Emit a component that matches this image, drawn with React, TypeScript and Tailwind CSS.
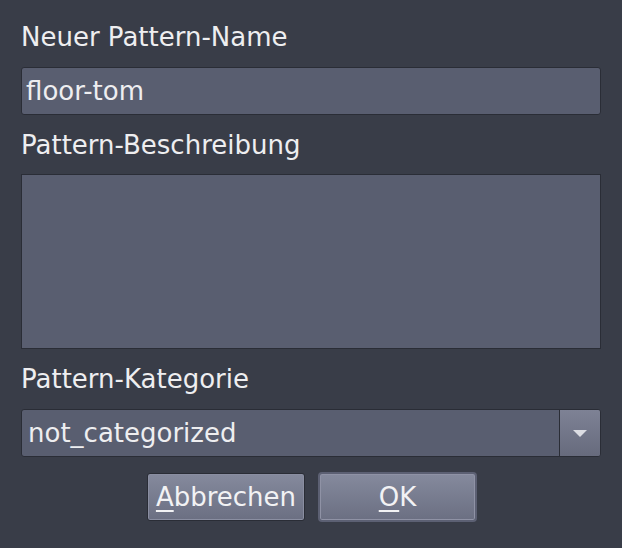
export default function App() {
  const font = { fontFamily: '"DejaVu Sans", sans-serif' }
  return (
    <div
      className="w-[622px] h-[548px] bg-[#393d48] text-[#eeeef0] text-[26px] px-[21px] pt-[23px] overflow-hidden"
      style={font}
    >
      <div className="h-[28px] leading-[28px]">Neuer Pattern-Name</div>

      <div className="mt-[16px] h-[48px] rounded-[3px] border border-[#2a2d36] bg-[#595e70] flex items-center pl-[4px]">
        <span className="leading-none">floor-tom</span>
      </div>

      <div className="mt-[16px] h-[28px] leading-[28px]">Pattern-Beschreibung</div>

      <div className="mt-[15px] h-[175px] border border-[#2a2d36] bg-[#595e70]" />

      <div className="mt-[16px] h-[28px] leading-[28px]">Pattern-Kategorie</div>

      <div className="mt-[16px] h-[48px] rounded-[3px] border border-[#2a2d36] bg-[#595e70] flex overflow-hidden">
        <div className="flex-1 flex items-center pl-[6px]">
          <span className="leading-none">not_categorized</span>
        </div>
        <div className="w-[41px] border-l border-[#2a2d36] bg-gradient-to-b from-[#7e8295] to-[#676b7d] flex items-center justify-center">
          <svg width="14" height="7" viewBox="0 0 14 7">
            <path d="M0 0 L14 0 L7 7 Z" fill="#dcdde3" />
          </svg>
        </div>
      </div>

      <div className="mt-[15px] pl-[2px] flex justify-center items-center gap-[13px]">
        <button
          className="w-[158px] h-[48px] rounded-[3px] border border-[#2a2d36] bg-gradient-to-b from-[#858a9d] to-[#6b6f82] shadow-[inset_0_0_0_1px_#8a8ea1] text-[#f2f2f4] leading-none"
          style={font}
        >
          <span className="underline decoration-2 underline-offset-[4px]">A</span>bbrechen
        </button>
        <button
          className="w-[159px] h-[50px] rounded-[4px] border-[2px] border-[#5c6073] bg-gradient-to-b from-[#858a9d] to-[#6b6f82] shadow-[inset_0_0_0_1px_#8f92a5] text-[#f2f2f4] leading-none"
          style={font}
        >
          <span className="underline decoration-2 underline-offset-[4px]">O</span>K
        </button>
      </div>
    </div>
  )
}
